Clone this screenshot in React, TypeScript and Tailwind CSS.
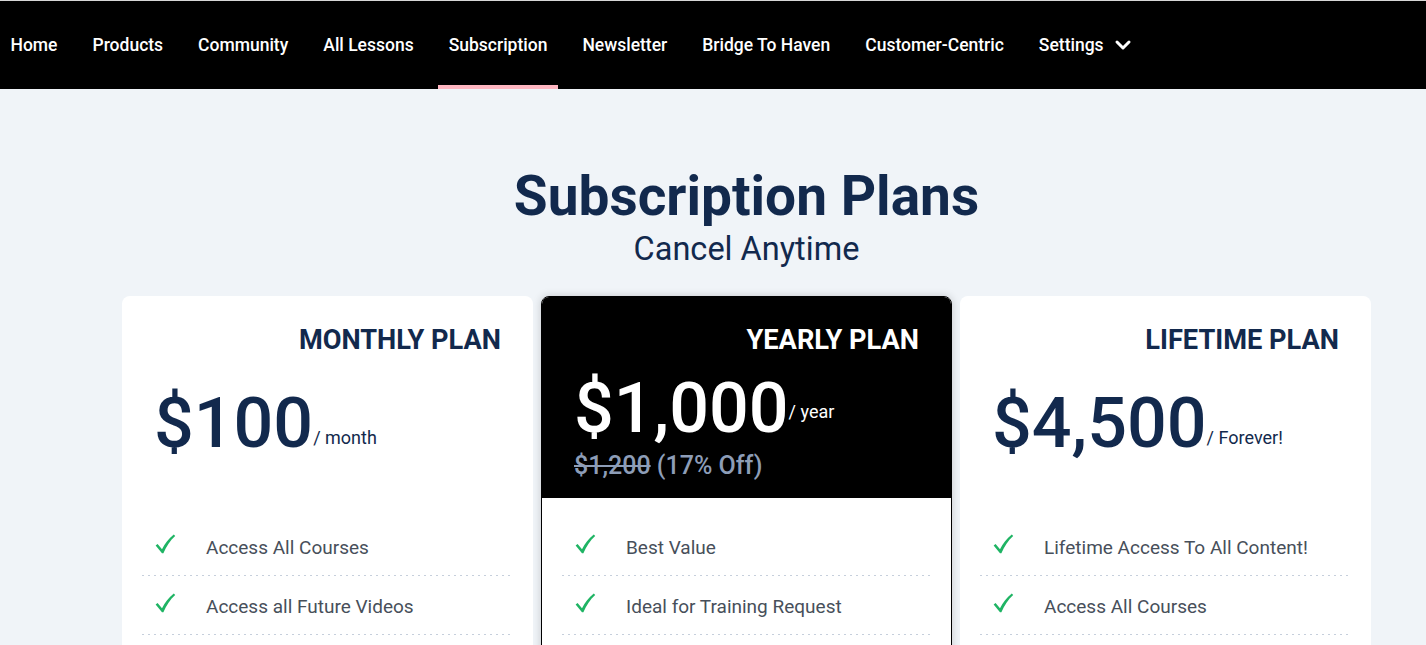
import { ChevronDown } from "lucide-react";

const links = [
  "Home",
  "Products",
  "Community",
  "All Lessons",
  "Subscription",
  "Newsletter",
  "Bridge To Haven",
  "Customer-Centric",
];

const plans = [
  {
    name: "MONTHLY PLAN",
    price: "$100",
    unit: "/ month",
    dark: false,
    priceTop: "pt-[31px]",
    unitAlign: "align-[3px]",
    features: ["Access All Courses", "Access all Future Videos"],
  },
  {
    name: "YEARLY PLAN",
    price: "$1,000",
    unit: "/ year",
    dark: true,
    priceTop: "pt-[16px]",
    unitAlign: "align-[14px]",
    features: ["Best Value", "Ideal for Training Request"],
  },
  {
    name: "LIFETIME PLAN",
    price: "$4,500",
    unit: "/ Forever!",
    dark: false,
    priceTop: "pt-[31px]",
    unitAlign: "align-[3px]",
    features: ["Lifetime Access To All Content!", "Access All Courses"],
  },
];

function Check() {
  return (
    <svg width="21" height="20" viewBox="0 0 21 20" className="-translate-y-[4px]">
      <path
        d="M0.6 11.6 L2.6 10.1 L7 15.2 C10 9.6 13.6 4.8 18.8 0.6 L20.2 1.9 C15.2 6.4 11.4 12 8.4 19.2 L7 19.2 Z"
        fill="#1fb464"
      />
    </svg>
  );
}

function PlanCard({ plan }: { plan: (typeof plans)[number] }) {
  return (
    <div
      className={
        plan.dark
          ? "rounded-lg border border-black bg-white overflow-hidden shadow-[0_0_8px_rgba(0,0,0,0.18)]"
          : "rounded-lg bg-white overflow-hidden"
      }
    >
      <div className={plan.dark ? "h-[201px] bg-black px-8 pt-[26px] text-white" : "h-[202px] px-8 pt-[27px] text-[#12294d]"}>
        <h3 className="text-right text-[27.2px] font-bold leading-[1.25]">{plan.name}</h3>
        <div className={plan.priceTop}>
          <div className="whitespace-nowrap text-[70px] font-medium leading-none">
            {plan.price}
            <span className={`text-[18px] font-normal ${plan.unitAlign}`}>{plan.unit}</span>
          </div>
          {plan.dark && (
            <div className="mt-2 text-[25px] font-medium leading-[1.2] text-[#8d9db7]">
              <span className="line-through">$1,200</span> (17% Off)
            </div>
          )}
        </div>
      </div>
      <ul className="px-5 pt-[19px] pb-8">
        {plan.features.map((f) => (
          <li key={f}>
            <div className="flex items-center pt-[17px] pb-[14px] pl-[13px]">
              <span className="w-[51px]">
                <Check />
              </span>
              <span className="text-[19px] leading-[27px] text-[#474f5a]">{f}</span>
            </div>
            <div className="h-px bg-[linear-gradient(to_right,#c6cfdc_35%,transparent_0)] bg-[length:6px_1px] bg-repeat-x" />
          </li>
        ))}
      </ul>
    </div>
  );
}

export default function App() {
  return (
    <div className="h-[645px] overflow-hidden bg-[#f0f4f8] font-['Roboto',sans-serif]">
      <nav className="flex h-[89px] items-stretch gap-[14px] border-t border-[#d6d6d6] bg-black">
        {links.map((l) => (
          <a
            key={l}
            className={
              l === "Subscription"
                ? "flex items-center border-b-4 border-[#ffb6c1] px-[10.5px] pt-1 text-[17.5px] font-medium text-white"
                : "flex items-center px-[10.5px] text-[17.5px] font-medium text-white"
            }
          >
            {l}
          </a>
        ))}
        <a className="flex items-center px-[10.5px] text-[17.5px] font-medium text-white">
          Settings
          <ChevronDown size={24} strokeWidth={3} className="ml-[7px]" />
        </a>
      </nav>

      <main className="flex flex-col items-center pl-[67px] pt-[76px]">
        <h1 className="text-[55px] font-bold leading-[1.13] text-[#12294d]">Subscription Plans</h1>
        <p className="mt-[3px] text-[32.5px] leading-[1.18] text-[#12294d]">Cancel Anytime</p>
        <div className="mt-[28px] grid w-[1249px] grid-cols-3 gap-2">
          {plans.map((p) => (
            <PlanCard key={p.name} plan={p} />
          ))}
        </div>
      </main>
    </div>
  );
}
